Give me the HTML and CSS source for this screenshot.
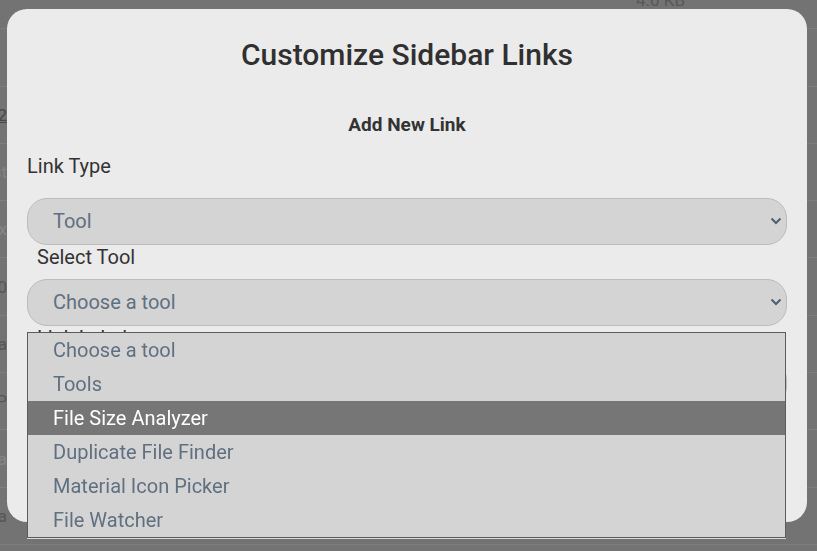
FILE: index.html
```html
<!DOCTYPE html>
<html lang="en">
<head>
<meta charset="UTF-8">
<meta name="viewport" content="width=device-width, initial-scale=1.0">
<title>Customize Sidebar Links</title>
<link rel="stylesheet" href="styles.css">
</head>
<body>
<div class="page">
    <div class="file-row"><span class="name"></span><span class="size">4.0 KB</span></div>
    <div class="file-row"><span class="name"></span><span class="size"></span></div>
    <div class="file-row"><span class="name link">log2</span></div>
    <div class="file-row"><span class="name faint">test</span></div>
    <div class="file-row"><span class="name faint">.tx</span></div>
    <div class="file-row"><span class="name">v1.0</span></div>
    <div class="file-row"><span class="name">data</span></div>
    <div class="file-row"><span class="name">.PP</span></div>
    <div class="file-row"><span class="name faint">Oka</span></div>
    <div class="file-row"><span class="name">Oka</span></div>
</div>

<div class="overlay">
    <div class="modal">
        <h2 class="modal-title">Customize Sidebar Links</h2>
        <h3 class="section-title">Add New Link</h3>

        <label class="field-label">Link Type</label>
        <select class="control">
            <option>Tool</option>
        </select>

        <label class="field-label sub">Select Tool</label>
        <div class="select-wrap">
            <select class="control">
                <option>Choose a tool</option>
            </select>
            <ul class="dropdown">
                <li>Choose a tool</li>
                <li>Tools</li>
                <li class="active">File Size Analyzer</li>
                <li>Duplicate File Finder</li>
                <li>Material Icon Picker</li>
                <li>File Watcher</li>
            </ul>
        </div>

        <label class="field-label sub">Link Label</label>
        <input class="control" type="text">
    </div>
</div>
</body>
</html>
```

FILE: styles.css
```css
body {
    margin: 0;
    background: #737373;
    font-family: 'Roboto', 'Liberation Sans', sans-serif;
    color: #333;
    overflow: hidden;
}

/* dimmed page behind the dialog */
.page {
    margin-top: -28px;
}

.file-row {
    display: flex;
    align-items: center;
    height: 56.3px;
    border-bottom: 1px solid #7e7e7e;
    font-size: 17px;
    color: #575757;
}

.file-row .name {
    display: block;
    margin-left: -42px;
    width: 49px;
    text-align: right;
    white-space: nowrap;
}

.file-row .name.link {
    color: #464646;
    text-decoration: underline;
}

.file-row .name.faint {
    color: #858585;
}

.file-row .size {
    margin-left: 629px;
}

.overlay {
    position: fixed;
    inset: 0;
}

.modal {
    box-sizing: border-box;
    width: 800px;
    min-height: 513px;
    margin: 9px 0 0 7px;
    padding: 28px 20px 20px;
    background: #ebebeb;
    border-radius: 20px;
    display: flex;
    flex-direction: column;
}

.modal-title {
    margin: 0;
    font-size: 30px;
    font-weight: 500;
    text-align: center;
    color: #303030;
}

.section-title {
    margin: 41px 0 17.5px;
    font-size: 19px;
    font-weight: 700;
    text-align: center;
    color: #333;
}

.field-label {
    font-size: 20px;
    color: #333;
    margin-bottom: 20px;
}

.field-label.sub {
    padding-left: 10px;
    margin-bottom: 10px;
}

.control {
    box-sizing: border-box;
    width: 100%;
    height: 47px;
    padding: 0 30px 0 25px;
    font-family: inherit;
    font-size: 20px;
    color: #607080;
    background: #d4d4d4 url("data:image/svg+xml,%3Csvg xmlns='http://www.w3.org/2000/svg' width='12' height='8' viewBox='0 0 12 8'%3E%3Cpath d='M1.5 1.5l4.5 4.5 4.5-4.5' fill='none' stroke='%234f5f6f' stroke-width='2'/%3E%3C/svg%3E") no-repeat right 4px center;
    border: 1px solid #bcbcbc;
    border-radius: 20px;
    -webkit-appearance: none;
    appearance: none;
    outline: none;
}

input.control {
    background-image: none;
}

.select-wrap {
    position: relative;
}

/* open option list of the tool select */
.dropdown {
    position: absolute;
    top: 53px;
    left: 0;
    right: 1px;
    margin: 0;
    padding: 0;
    list-style: none;
    background: #d4d4d4;
    border: 1px solid #5c5c5c;
    box-shadow: 0 1px 0 #d9d9d9;
    z-index: 2;
}

.dropdown li {
    height: 34px;
    line-height: 34px;
    padding-left: 25px;
    font-size: 20px;
    color: #607080;
}

.dropdown li.active {
    background: #767676;
    color: #fff;
}
```
